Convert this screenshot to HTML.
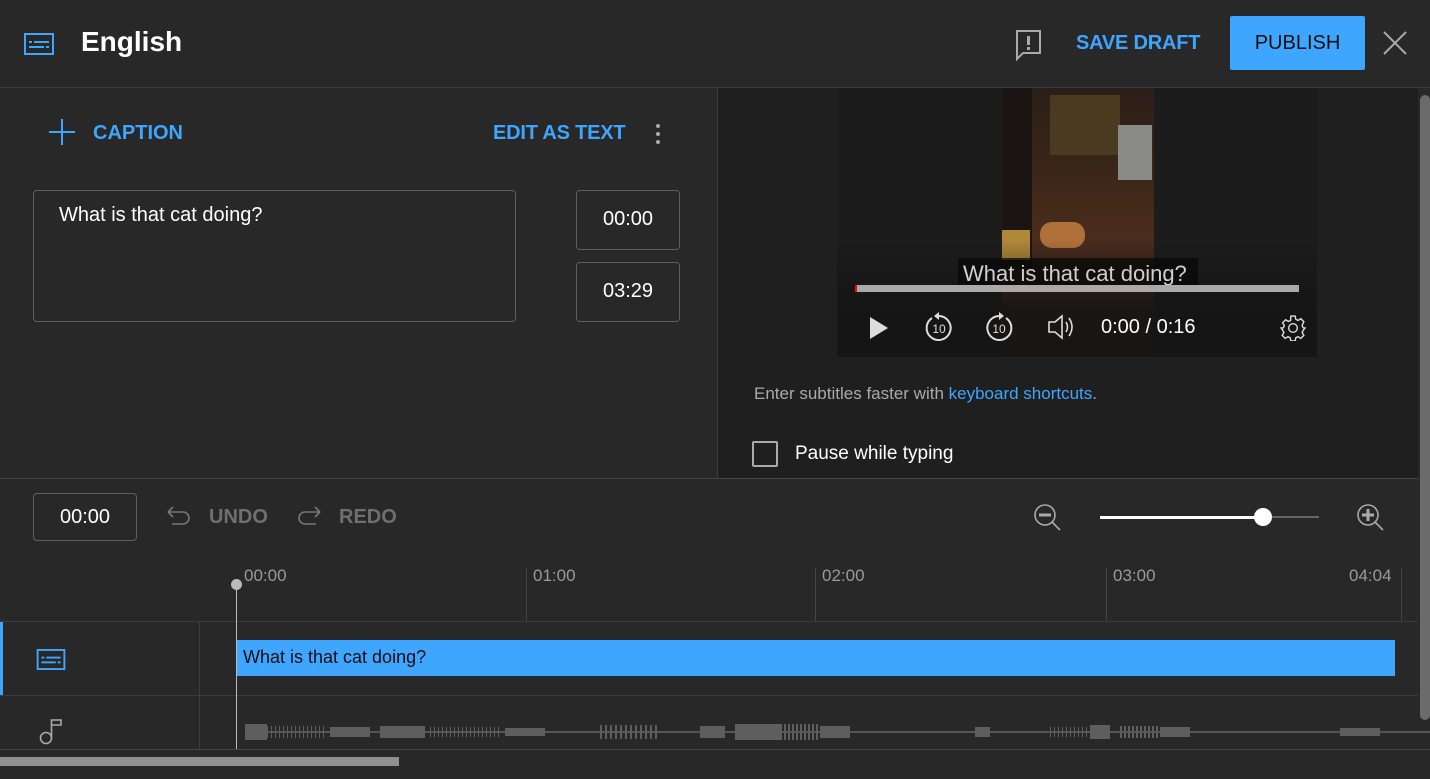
<!DOCTYPE html>
<html><head><style>
*{box-sizing:border-box;margin:0;padding:0}
body{width:1430px;height:779px;background:#282828;font-family:"Liberation Sans",sans-serif;position:relative;overflow:hidden;color:#fff}
.a{position:absolute}
.blue{color:#3ea6ff}
.box{position:absolute;border:1px solid #5f5f5f;border-radius:4px}
.t{font-size:20px;color:#fff;text-align:center}
.hl{position:absolute;height:1px;background:#3c3c3c}
.vl{position:absolute;width:1px;background:#3c3c3c}
.tick{position:absolute;top:568px;height:53px;width:1px;background:#444}
.lab{position:absolute;top:566px;font-size:17px;color:#9a9a9a}
.w{position:absolute;background:#5e5e5e}
</style></head><body>
<!-- header -->
<svg class="a" style="left:24px;top:33px" width="30" height="22" viewBox="0 0 30 22"><rect x="1" y="1" width="28" height="20" fill="none" stroke="#3ea6ff" stroke-width="2"/><rect x="5" y="8" width="3" height="2" fill="#3ea6ff"/><rect x="10" y="8" width="15" height="2" fill="#3ea6ff"/><rect x="5" y="13" width="15" height="2" fill="#3ea6ff"/><rect x="22" y="13" width="3" height="2" fill="#3ea6ff"/></svg>
<div class="a" style="left:81px;top:26px;font-size:28px;font-weight:bold">English</div>
<svg class="a" style="left:1015px;top:30px" width="27" height="32" viewBox="0 0 27 32"><path d="M1 1H25V23H8L2 29V1Z" fill="none" stroke="#aaa" stroke-width="2"/><rect x="12" y="6" width="3" height="9" fill="#aaa"/><rect x="12" y="17" width="3" height="3" fill="#aaa"/></svg>
<div class="a blue" style="left:1076px;top:32px;font-size:20px;font-weight:bold;letter-spacing:-0.2px">SAVE DRAFT</div>
<div class="a" style="left:1230px;top:16px;width:135px;height:54px;background:#3ea6ff;border-radius:2px;color:#0f0f0f;font-size:20px;text-align:center;line-height:54px">PUBLISH</div>
<svg class="a" style="left:1383px;top:31px" width="24" height="24"><path d="M1 1L23 23M23 1L1 23" stroke="#aaa" stroke-width="2"/></svg>
<div class="hl" style="left:0;top:87px;width:1430px"></div>
<!-- left panel -->
<svg class="a" style="left:49px;top:119px" width="26" height="26"><path d="M13 0V26M0 13H26" stroke="#3ea6ff" stroke-width="2"/></svg>
<div class="a blue" style="left:93px;top:122px;font-size:20px;font-weight:bold">CAPTION</div>
<div class="a blue" style="left:493px;top:122px;font-size:20px;font-weight:bold;letter-spacing:-0.2px">EDIT AS TEXT</div>
<div class="a" style="left:656px;top:124px;width:4px;height:4px;border-radius:2px;background:#aaa;box-shadow:0 8px #aaa,0 16px #aaa"></div>
<div class="box" style="left:33px;top:190px;width:483px;height:132px"></div>
<div class="a" style="left:59px;top:204px;font-size:20px">What is that cat doing?</div>
<div class="box t" style="left:576px;top:190px;width:104px;height:60px;line-height:56px">00:00</div>
<div class="box t" style="left:576px;top:262px;width:104px;height:60px;line-height:56px">03:29</div>
<!-- right panel -->
<div class="a" style="left:718px;top:88px;width:700px;height:390px;background:#1f1f1f"></div>
<div class="vl" style="left:717px;top:88px;height:390px"></div>
<div class="a" style="left:837px;top:88px;width:480px;height:269px;background:#1c1c1c"></div>
<div class="a" style="left:1002px;top:88px;width:152px;height:269px;background:linear-gradient(180deg,#2a1f18 0%,#3a2618 30%,#4a2c1c 55%,#3d2518 80%,#2e2018 100%)"></div>
<div class="a" style="left:1002px;top:88px;width:30px;height:180px;background:#1a1412"></div>
<div class="a" style="left:1050px;top:95px;width:70px;height:60px;background:#4a3a22"></div>
<div class="a" style="left:1118px;top:125px;width:34px;height:55px;background:#8a8a86"></div>
<div class="a" style="left:1040px;top:222px;width:45px;height:26px;border-radius:12px;background:#b0703a"></div>
<div class="a" style="left:1002px;top:230px;width:28px;height:30px;background:#b0883a"></div>
<div class="a" style="left:837px;top:240px;width:480px;height:117px;background:linear-gradient(180deg,rgba(20,20,20,0),rgba(20,20,20,.85) 60%)"></div>
<div class="a" style="left:958px;top:258px;width:240px;height:33px;background:rgba(8,8,8,.75)"></div>
<div class="a" style="left:963px;top:261px;font-size:22px;color:#d0d0d0">What is that cat doing?</div>
<div class="a" style="left:855px;top:285px;width:444px;height:7px;background:#aaa"></div>
<div class="a" style="left:855px;top:285px;width:2px;height:7px;background:#f00"></div>
<svg class="a" style="left:868px;top:316px" width="22" height="24"><path d="M2 1L20 12L2 23Z" fill="#ddd"/></svg>
<svg class="a" style="left:924px;top:312px" width="30" height="30" viewBox="0 0 30 30"><path d="M8 6A12 12 0 1 0 15 4" fill="none" stroke="#ddd" stroke-width="2"/><path d="M15 0L10 4L15 8Z" fill="#ddd"/><text x="15" y="21" font-size="12" fill="#ddd" text-anchor="middle" font-family="Liberation Sans">10</text></svg>
<svg class="a" style="left:984px;top:312px" width="30" height="30" viewBox="0 0 30 30"><path d="M22 6A12 12 0 1 1 15 4" fill="none" stroke="#ddd" stroke-width="2"/><path d="M15 0L20 4L15 8Z" fill="#ddd"/><text x="15" y="21" font-size="12" fill="#ddd" text-anchor="middle" font-family="Liberation Sans">10</text></svg>
<svg class="a" style="left:1047px;top:314px" width="30" height="26"><path d="M2 8H8L15 2V24L8 18H2Z" fill="none" stroke="#ddd" stroke-width="1.6"/><path d="M19 8Q22 13 19 18M22 4Q28 13 22 22" fill="none" stroke="#ddd" stroke-width="1.6"/></svg>
<div class="a" style="left:1101px;top:316px;font-size:20px;color:#fff">0:00 / 0:16</div>
<svg class="a" style="left:1280px;top:315px" width="26" height="26" viewBox="0 0 24 24"><path d="M12 8a4 4 0 1 0 0 8a4 4 0 1 0 0-8zM10 1h4l.6 3 2 1 2.6-1.6 2.8 2.8L20.4 9.8l1 2L23 12v0h-0l-1.6 2.2-1 2 1.6 2.6-2.8 2.8-2.6-1.6-2 1-.6 3h-4l-.6-3-2-1-2.6 1.6-2.8-2.8 1.6-2.6-1-2L1 12l2-.2 1-2L2.4 7.2l2.8-2.8L7.8 6l2-1z" fill="none" stroke="#ddd" stroke-width="1.3"/></svg>
<div class="a" style="left:754px;top:384px;font-size:17px;color:#aaa">Enter subtitles faster with <span class="blue">keyboard shortcuts</span>.</div>
<div class="a" style="left:752px;top:441px;width:26px;height:26px;border:2px solid #aaa;border-radius:2px"></div>
<div class="a" style="left:795px;top:443px;font-size:19px">Pause while typing</div>
<div class="hl" style="left:0;top:478px;width:1418px;background:#444"></div>
<!-- toolbar -->
<div class="box t" style="left:33px;top:493px;width:104px;height:48px;line-height:46px">00:00</div>
<svg class="a" style="left:166px;top:505px" width="26" height="24"><path d="M2 7H17A6 6 0 0 1 17 19H6M2 7L7 2M2 7L7 12" fill="none" stroke="#777" stroke-width="1.6"/></svg>
<div class="a" style="left:209px;top:506px;font-size:20px;font-weight:bold;color:#6f6f6f">UNDO</div>
<svg class="a" style="left:296px;top:505px" width="26" height="24"><path d="M24 7H9A6 6 0 0 0 9 19H20M24 7L19 2M24 7L19 12" fill="none" stroke="#777" stroke-width="1.6"/></svg>
<div class="a" style="left:339px;top:506px;font-size:20px;font-weight:bold;color:#6f6f6f">REDO</div>
<svg class="a" style="left:1033px;top:503px" width="28" height="28"><circle cx="12" cy="12" r="10" fill="none" stroke="#aaa" stroke-width="1.6"/><rect x="6" y="10.5" width="12" height="3" fill="#aaa"/><path d="M19 19L27 27" stroke="#aaa" stroke-width="1.6"/></svg>
<div class="a" style="left:1100px;top:516px;width:163px;height:3px;background:#fff"></div>
<div class="a" style="left:1263px;top:516px;width:56px;height:2px;background:#666"></div>
<div class="a" style="left:1254px;top:508px;width:18px;height:18px;border-radius:50%;background:#fff"></div>
<svg class="a" style="left:1356px;top:503px" width="28" height="28"><circle cx="12" cy="12" r="10" fill="none" stroke="#aaa" stroke-width="1.6"/><path d="M6 12H18M12 6V18" stroke="#aaa" stroke-width="3"/><path d="M19 19L27 27" stroke="#aaa" stroke-width="1.6"/></svg>
<!-- ruler -->
<div class="tick" style="left:526px"></div><div class="tick" style="left:815px"></div><div class="tick" style="left:1106px"></div><div class="tick" style="left:1401px"></div>
<div class="lab" style="left:244px">00:00</div><div class="lab" style="left:533px">01:00</div><div class="lab" style="left:822px">02:00</div><div class="lab" style="left:1113px">03:00</div><div class="lab" style="left:1349px">04:04</div>
<div class="hl" style="left:0;top:621px;width:1418px"></div>
<div class="hl" style="left:0;top:695px;width:1418px"></div>
<div class="hl" style="left:0;top:749px;width:1430px;background:#444"></div>
<div class="vl" style="left:199px;top:622px;height:127px"></div>
<div class="a" style="left:0;top:622px;width:3px;height:73px;background:#3ea6ff"></div>
<svg class="a" style="left:36px;top:649px" width="30" height="21" viewBox="0 0 30 22"><rect x="1" y="1" width="28" height="20" fill="none" stroke="#3ea6ff" stroke-width="2"/><rect x="5" y="8" width="3" height="2" fill="#3ea6ff"/><rect x="10" y="8" width="15" height="2" fill="#3ea6ff"/><rect x="5" y="13" width="15" height="2" fill="#3ea6ff"/><rect x="22" y="13" width="3" height="2" fill="#3ea6ff"/></svg>
<svg class="a" style="left:39px;top:719px" width="24" height="26"><circle cx="7" cy="19" r="5.5" fill="none" stroke="#aaa" stroke-width="1.6"/><path d="M12.5 19V1H22V6H13" fill="none" stroke="#aaa" stroke-width="1.6"/></svg>
<div class="a" style="left:236px;top:640px;width:1159px;height:36px;background:#3ea6ff"></div>
<div class="a" style="left:243px;top:647px;font-size:18px;color:#0f0f0f">What is that cat doing?</div>
<!-- waveform -->
<div class="w" style="left:245px;top:731px;width:1185px;height:2px;background:#555"></div>
<div class="w" style="left:245px;top:724px;width:22px;height:16px"></div>
<div class="a" style="left:267px;top:726px;width:60px;height:12px;background:repeating-linear-gradient(90deg,#5e5e5e 0 1px,transparent 1px 4px)"></div>
<div class="w" style="left:330px;top:727px;width:40px;height:10px"></div>
<div class="w" style="left:380px;top:726px;width:45px;height:12px"></div>
<div class="a" style="left:430px;top:727px;width:70px;height:10px;background:repeating-linear-gradient(90deg,#5e5e5e 0 1px,transparent 1px 4px)"></div>
<div class="w" style="left:505px;top:728px;width:40px;height:8px"></div>
<div class="a" style="left:600px;top:725px;width:60px;height:14px;background:repeating-linear-gradient(90deg,#5e5e5e 0 2px,transparent 2px 5px)"></div>
<div class="w" style="left:700px;top:726px;width:25px;height:12px"></div>
<div class="w" style="left:735px;top:724px;width:45px;height:16px"></div>
<div class="a" style="left:780px;top:724px;width:40px;height:16px;background:repeating-linear-gradient(90deg,#5e5e5e 0 2px,transparent 2px 4px)"></div>
<div class="w" style="left:820px;top:726px;width:30px;height:12px"></div>
<div class="w" style="left:975px;top:727px;width:15px;height:10px"></div>
<div class="a" style="left:1050px;top:727px;width:40px;height:10px;background:repeating-linear-gradient(90deg,#5e5e5e 0 1px,transparent 1px 4px)"></div>
<div class="w" style="left:1090px;top:725px;width:20px;height:14px"></div>
<div class="a" style="left:1120px;top:726px;width:40px;height:12px;background:repeating-linear-gradient(90deg,#5e5e5e 0 2px,transparent 2px 4px)"></div>
<div class="w" style="left:1160px;top:727px;width:30px;height:10px"></div>
<div class="w" style="left:1340px;top:728px;width:40px;height:8px"></div>
<div class="a" style="left:236px;top:585px;width:1px;height:164px;background:#bbb"></div>
<div class="a" style="left:231px;top:579px;width:11px;height:11px;border-radius:50%;background:#bbb"></div>
<!-- scrollbars -->
<div class="a" style="left:1420px;top:95px;width:10px;height:625px;background:#6b6b6b;border-radius:5px"></div>
<div class="a" style="left:0;top:757px;width:399px;height:9px;background:#909090"></div>
</body></html>
